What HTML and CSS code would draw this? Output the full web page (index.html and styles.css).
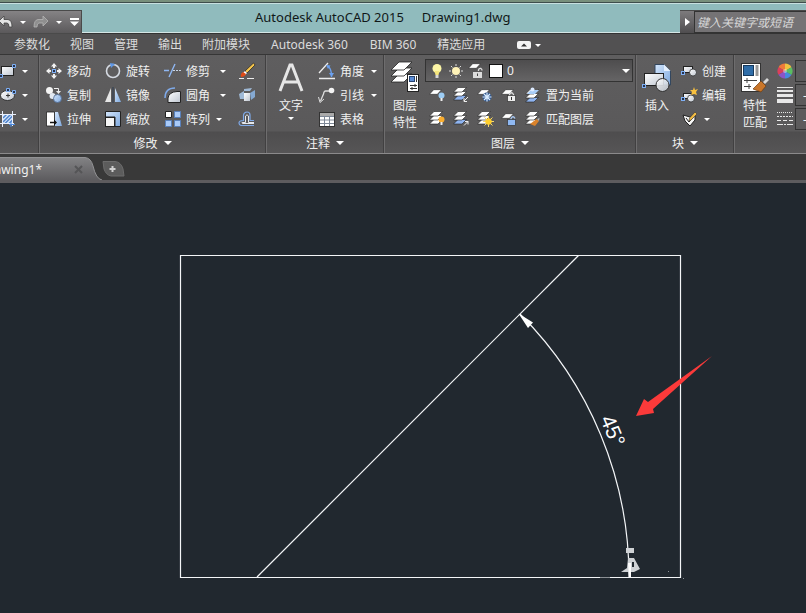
FILE: index.html
```html
<!DOCTYPE html>
<html lang="zh-CN">
<head>
    <meta charset="UTF-8">
    <meta name="viewport" content="width=device-width, initial-scale=1.0">
    <title>Autodesk AutoCAD 2015 - Drawing1.dwg</title>
    <link rel="stylesheet" href="styles.css">
</head>
<body>
    <!-- shared shapes -->
    <svg class="defs" width="0" height="0" aria-hidden="true">
        <defs>
            <linearGradient id="blue" x1="0" y1="0" x2="1" y2="1">
                <stop offset="0" stop-color="#d3e5fb"/>
                <stop offset="1" stop-color="#7fa9de"/>
            </linearGradient>
            <linearGradient id="white" x1="0" y1="0" x2="1" y2="1">
                <stop offset="0" stop-color="#ffffff"/>
                <stop offset="1" stop-color="#bfc6d0"/>
            </linearGradient>
            <linearGradient id="tabfill" x1="0" y1="0" x2="0" y2="1">
                <stop offset="0" stop-color="#828284"/>
                <stop offset="1" stop-color="#5d5c5f"/>
            </linearGradient>
            <symbol id="sheet" viewBox="0 0 14 6">
                <path d="M5 .5H13.500L9 5.500H.5Z" fill="#fff" stroke="#222" stroke-width=".6"/>
            </symbol>
            <symbol id="stack" viewBox="0 0 14 14">
                <path d="M5 8.500H13.500L9 13H.5Z" fill="#fff" stroke="#222" stroke-width=".6"/>
                <path d="M5 4.500H13.500L9 9H.5Z" fill="#fff" stroke="#222" stroke-width=".6"/>
                <path d="M5 .5H13.500L9 5H.5Z" fill="#fff" stroke="#222" stroke-width=".6"/>
            </symbol>
            <symbol id="stackblue" viewBox="0 0 14 14">
                <path d="M5 8.500H13.500L9 13H.5Z" fill="#8fb4f0" stroke="#222" stroke-width=".6"/>
                <path d="M5 4.500H13.500L9 9H.5Z" fill="#fff" stroke="#222" stroke-width=".6"/>
                <path d="M5 .5H13.500L9 5H.5Z" fill="#fff" stroke="#222" stroke-width=".6"/>
            </symbol>
        </defs>
    </svg>

    <header class="titlebar">
        <div class="quick">
            <button class="undo" aria-label="放弃"><svg width="13" height="14" viewBox="0 0 13 14"><path d="M-1 6L4 1V4.500H8Q12 5 12 12H9Q9 8 7 8H4V11Z" fill="#e4e4e4" stroke="#444" stroke-width=".8"/></svg></button>
            <button aria-label="放弃列表"><i class="caret"></i></button>
            <button class="redo" aria-label="重做"><svg width="16" height="14" viewBox="0 0 16 14"><path d="M15 6L10 1V4.500H5Q1 5 1 12H4Q4 8 6 8H10V11Z" fill="#8f8f8f" stroke="#b5b5b5" stroke-width=".8"/></svg></button>
            <button aria-label="重做列表"><i class="caret"></i></button>
            <button class="more" aria-label="自定义"><svg width="9" height="8" viewBox="0 0 9 8"><path d="M0 0H9V2H0ZM0 3.500H9L4.500 8Z" fill="#fff"/></svg></button>
        </div>
        <h1><span>Autodesk AutoCAD 2015</span><span>Drawing1.dwg</span></h1>
        <form class="search">
            <button type="button" aria-label="展开"><svg width="5" height="8" viewBox="0 0 5 8"><path d="M0 0L5 4L0 8Z" fill="#fff"/></svg></button>
            <input type="text" aria-label="搜索" placeholder="键入关键字或短语">
        </form>
    </header>

    <nav class="menu">
        <a href="#">参数化</a>
        <a href="#">视图</a>
        <a href="#">管理</a>
        <a href="#">输出</a>
        <a href="#">附加模块</a>
        <a class="latin" href="#">Autodesk 360</a>
        <a class="latin" href="#">BIM 360</a>
        <a href="#">精选应用</a>
        <button class="fold" aria-label="最小化功能区"><svg width="14" height="8" viewBox="0 0 14 8"><rect width="14" height="8" rx="2" fill="#f4f4f4"/><path d="M4 5.500L7 2.500L10 5.500Z" fill="#333"/></svg><i class="caret"></i></button>
    </nav>

    <main class="ribbon">
        <section class="panel draw">
            <div class="body">
                <div class="tools">
                    <button aria-label="矩形"><svg width="17" height="18" viewBox="0 0 17 18"><rect x="1.500" y="4.500" width="12" height="9" fill="url(#white)" stroke="#222"/><path d="M12.500 2.500h3v3h-3zM-.5 12.500h3v3h-3z" fill="#27334c" stroke="#7fb0f5"/></svg></button>
                    <button aria-label="矩形列表"><i class="caret"></i></button>
                    <button aria-label="椭圆"><svg width="17" height="18" viewBox="0 0 17 18"><ellipse cx="7.500" cy="9.500" rx="7" ry="5" fill="url(#white)" stroke="#333"/><path d="M6 9.500h4M8 7.500v4" stroke="#333"/><path d="M6.500 2.500h3v3h-3zM12.500 4.500h3v3h-3z" fill="#27334c" stroke="#7fb0f5"/></svg></button>
                    <button aria-label="椭圆列表"><i class="caret"></i></button>
                    <button aria-label="图案填充"><svg width="17" height="18" viewBox="0 0 17 18"><rect x="2.500" y="4.500" width="10" height="9" fill="#dbe9fb"/><path d="M3 8l3.500-3.500M3 12l7.500-7.500M5 13.500l7.500-7.500M9 13.500l3.500-3.500" stroke="#4d82cc" stroke-width="1.500"/><path d="M0 4.500H16M0 13.500H14M2.500 1V17M12.500 1V16" stroke="#e8eefa"/><path d="M11 12v5M9 14.500h6" stroke="#4d8be0"/></svg></button>
                    <button aria-label="图案填充列表"><i class="caret"></i></button>
                </div>
            </div>
            <div class="caption"></div>
        </section>

        <section class="panel modify">
            <div class="body">
                <div class="tools">
                    <button><svg width="18" height="18" viewBox="0 0 18 18"><path d="M9 1L12 4.500H10V6H8V4.500H6ZM9 17L6 13.500H8V12H10V13.500H12ZM1 9L4.500 6V8H6V10H4.500V12ZM17 9L13.500 12V10H12V8H13.500V6Z" fill="#f2f2f2"/><rect x="7.500" y="7.500" width="3" height="3" fill="#27334c" stroke="#7fb0f5"/></svg>移动</button>
                    <button><svg width="18" height="18" viewBox="0 0 18 18"><circle cx="9" cy="9" r="6.500" fill="none" stroke="#d5dae2" stroke-width="1.600"/><path d="M6 1L11 2L7 6Z" fill="#5d97e8"/></svg>旋转</button>
                    <button><svg width="18" height="18" viewBox="0 0 18 18"><path d="M0 8.500H5M5 15L11 2" stroke="#8fb7f2" stroke-width="1.400"/><path d="M9 8.500h2M12 8.500h2M15 8.500h2" stroke="#c9d5e6"/></svg>修剪</button>
                    <button aria-label="修剪列表"><i class="caret"></i></button>
                    <button aria-label="删除"><svg width="18" height="18" viewBox="0 0 18 18"><path d="M15.500 1L17 3L9 11L7 9Z" fill="#f6c54c" stroke="#222" stroke-width=".7"/><path d="M7 9L9 11L7 13L5 11Z" fill="#fff"/><path d="M5 10L8 12Q7 15 3 15Q2 12 5 10Z" fill="#df4b18"/><path d="M1 16.500H6M9 16.500H16" stroke="#eee"/></svg></button>

                    <button><svg width="18" height="18" viewBox="0 0 18 18"><circle cx="4.500" cy="4.500" r="3.500" fill="#f4f4f4"/><circle cx="7.500" cy="10" r="3" fill="#e2e8f0"/><circle cx="12.500" cy="12.500" r="4" fill="url(#blue)" stroke="#4c6890" stroke-width=".8"/><path d="M9 2.500h4.500v3" fill="none" stroke="#eee"/><path d="M11 5h5L13.500 8Z" fill="#eee"/></svg>复制</button>
                    <button><svg width="18" height="18" viewBox="0 0 18 18"><path d="M7 2V16H1Z" fill="#e6e6e6"/><path d="M11 2V16H17Z" fill="url(#blue)"/><path d="M9 1V17" stroke="#2f3c50"/></svg>镜像</button>
                    <button><svg width="18" height="18" viewBox="0 0 18 18"><path d="M4 16.500V12Q5 6 13 5.500H16.500V16.500Z" fill="url(#white)" stroke="#222"/><path d="M1 12Q1 2 11 2" fill="none" stroke="#7ea9e8" stroke-width="1.500"/></svg>圆角</button>
                    <button aria-label="圆角列表"><i class="caret"></i></button>
                    <button aria-label="分解"><svg width="18" height="18" viewBox="0 0 18 18"><path d="M1 8L6 5V13L2 13ZM6 3L14 2L12 5L6 5Z" fill="#9fb9d6"/><path d="M6 7H12V15H6Z" fill="url(#white)"/><path d="M12 7L17 4V11L13 14Z" fill="#85a9d2"/></svg></button>

                    <button><svg width="18" height="18" viewBox="0 0 18 18"><path d="M10 2H13L17 16H10Z" fill="url(#blue)"/><path d="M1.500 2H9.500V16H1.500Z" fill="#fff" stroke="#222" stroke-width=".8"/><path d="M5 12.500H11" stroke="#111" stroke-width="1.500"/><path d="M9 9.500L12 12.500L9 15.500Z" fill="#111"/></svg>拉伸</button>
                    <button><svg width="18" height="18" viewBox="0 0 18 18"><path d="M1.500 1.500H16.500V16.500H11V7H1.500Z" fill="url(#blue)" stroke="#222"/><rect x="1.500" y="7.500" width="9" height="9" fill="#f5f5f5" stroke="#222"/></svg>缩放</button>
                    <button><svg width="18" height="18" viewBox="0 0 18 18"><path d="M1.500 1.500h6v6h-6z" fill="#fff" stroke="#222"/><path d="M10.500 1.500h6v6h-6zM1.500 10.500h6v6h-6zM10.500 10.500h6v6h-6z" fill="#a9caf8" stroke="#5981bb"/></svg>阵列</button>
                    <button class="near" aria-label="阵列列表"><i class="caret"></i></button>
                    <button aria-label="偏移"><svg width="18" height="18" viewBox="0 0 18 18"><path d="M16 15.500H3Q1 15 1 13Q1 10.500 5.500 10.500V5Q6 2 9 2Q12 2 12 5V10.500H16" fill="none" stroke="#7ea9e8" stroke-width="1.200"/><path d="M16 13.500H4.500Q3 12.500 5 12.500H7.500V6Q9 3.500 10.500 6V12.500H16" fill="none" stroke="#e4e7ec"/></svg></button>
                </div>
            </div>
            <button class="caption">修改<i class="caret big"></i></button>
        </section>

        <section class="panel annotate">
            <div class="body">
                <button class="large"><svg width="30" height="36" viewBox="0 0 30 36"><path d="M4 32L14 6H16L26 32M8 23H22" fill="none" stroke="#e6e6e6" stroke-width="3"/></svg><span>文字</span><i class="caret"></i></button>
                <div class="tools">
                    <button><svg width="18" height="18" viewBox="0 0 18 18"><path d="M1 16.500H17M1 11L10 1" stroke="#eee" stroke-width="1.300"/><path d="M10 4Q14 8 13.500 15" fill="none" stroke="#6ba0ee" stroke-width="1.400"/><path d="M8 3L12.500 3.500L10 7ZM11 11H16L13.500 15Z" fill="#6ba0ee"/></svg>角度</button>
                    <button aria-label="角度列表"><i class="caret"></i></button>
                    <button><svg width="18" height="18" viewBox="0 0 18 18"><circle cx="13.500" cy="4.500" r="2.800" fill="#f4f4f4"/><path d="M11 5H7.500Q6 5 5.500 8L2.500 15" fill="none" stroke="#ddd" stroke-width="1.300"/><path d="M.5 11L2 16.500L6 13" fill="none" stroke="#ddd"/></svg>引线</button>
                    <button aria-label="引线列表"><i class="caret"></i></button>
                    <button><svg width="18" height="18" viewBox="0 0 18 18"><rect x="1.500" y="2.500" width="15" height="14" fill="#fff" stroke="#333"/><path d="M2 3H16V6H2Z" fill="#aaa"/><path d="M2 6.500H16M2 10H16M2 13.500H16M6.500 6V16M11.500 6V16" stroke="#7e8896"/></svg>表格</button>
                </div>
            </div>
            <button class="caption">注释<i class="caret big"></i></button>
        </section>

        <section class="panel layers">
            <div class="body">
                <button class="large"><svg width="30" height="36" viewBox="0 0 30 36"><path d="M9 15H22L14 23H1Z" fill="#fff" stroke="#222" stroke-width=".8"/><path d="M9 9H22L14 17H1Z" fill="#fff" stroke="#222" stroke-width=".8"/><path d="M9 3H22L14 11H1Z" fill="#fff" stroke="#222" stroke-width=".8"/><rect x="17.500" y="15.500" width="11" height="17" fill="#fff" stroke="#222"/><rect x="19.500" y="17.500" width="5" height="5" fill="#5c8dd6" stroke="#27436f"/><path d="M26.500 17V23M20 26.500H27M20 29.500H27M25 25V28M22 28V31" stroke="#333"/></svg><span>图层</span><span>特性</span></button>
                <div class="side">
                    <div class="current">
                        <svg width="14" height="18" viewBox="0 0 14 18"><circle cx="7" cy="6.500" r="4.500" fill="#fdf6a6"/><path d="M4.500 9H9.500L8.500 13H5.500Z" fill="#f4e57c"/><path d="M5.500 13H8.500V16H5.500Z" fill="#d8d8d8"/></svg>
                        <svg width="18" height="18" viewBox="0 0 18 18"><path d="M9 2V4M9 14V16M2 9H4M14 9H16M4 4L5.500 5.500M12.500 12.500L14 14M14 4L12.500 5.500M5.500 12.500L4 14" stroke="#ddd"/><circle cx="9" cy="9" r="4" fill="#fff3b8"/></svg>
                        <svg width="18" height="18" viewBox="0 0 18 18"><use href="#sheet" x="0" y="1" width="13" height="6"/><path d="M10.500 9V8Q11 6 13 6.500Q14 7 14 8.500" fill="none" stroke="#ddd" stroke-width="1.300"/><rect x="5" y="10" width="9" height="6" fill="#ddd"/><path d="M9.500 11.500V14" stroke="#444"/></svg>
                        <span class="swatch"></span>
                        <select aria-label="图层"><option>0</option></select>
                        <i class="caret big"></i>
                    </div>
                    <div class="tools">
                        <button aria-label="关闭图层"><svg width="18" height="18" viewBox="0 0 18 18"><use href="#sheet" x="0" y="3" width="13" height="6"/><circle cx="12.500" cy="9.500" r="3" fill="#9cccf4"/><path d="M12.500 12V15" stroke="#eee" stroke-width="2"/></svg></button>
                        <button aria-label="隔离图层"><svg width="18" height="18" viewBox="0 0 18 18"><use href="#stackblue" x="0" y="1" width="14" height="14"/><path d="M15 11L11 15M11 12V15.500H14" fill="none" stroke="#eee"/></svg></button>
                        <button aria-label="冻结图层"><svg width="18" height="18" viewBox="0 0 18 18"><use href="#sheet" x="0" y="3" width="13" height="6"/><circle cx="10" cy="11" r="4.500" fill="#35598d"/><path d="M10 6.500V15.500M5.500 11H14.500M7 8L13 14M13 8L7 14" stroke="#d9ecff" stroke-width="1.200"/></svg></button>
                        <button aria-label="锁定图层"><svg width="18" height="18" viewBox="0 0 18 18"><use href="#sheet" x="0" y="3" width="13" height="6"/><path d="M8.500 10V8.500Q10.500 5 12.500 8.500V10" fill="none" stroke="#ddd" stroke-width="1.300"/><rect x="6.500" y="9.500" width="8" height="6" fill="#eee" stroke="#333" stroke-width=".7"/><path d="M10.500 11V14" stroke="#333"/></svg></button>
                        <button class="wide"><svg width="18" height="18" viewBox="0 0 18 18"><use href="#stackblue" x="0" y="3" width="14" height="14"/><path d="M6 4H14L10 8H2Z" fill="#a7ccf8"/><circle cx="7.500" cy="3.500" r="2" fill="#dceaff"/></svg>置为当前</button>

                        <button aria-label="打开所有图层"><svg width="18" height="18" viewBox="0 0 18 18"><use href="#stack" x="0" y="1" width="14" height="14"/><circle cx="12.500" cy="9.500" r="3" fill="#f9ad2f"/><path d="M12.500 12V15" stroke="#eee" stroke-width="2"/></svg></button>
                        <button aria-label="取消隔离"><svg width="18" height="18" viewBox="0 0 18 18"><use href="#stackblue" x="0" y="1" width="14" height="14"/><path d="M11 15.500L15 11.500M12 11.500H15V14.500" fill="none" stroke="#eee"/></svg></button>
                        <button aria-label="解冻所有图层"><svg width="18" height="18" viewBox="0 0 18 18"><use href="#stack" x="0" y="1" width="14" height="14"/><path d="M11.500 6V17M6 11.500H17M7.500 7.500L15.500 15.500M15.500 7.500L7.500 15.500" stroke="#f8d96b"/><circle cx="11.500" cy="11.500" r="3.200" fill="#ffcf2d"/></svg></button>
                        <button aria-label="解锁图层"><svg width="18" height="18" viewBox="0 0 18 18"><use href="#sheet" x="0" y="3" width="13" height="6"/><path d="M10 10V8.500Q12 5 14 8.500" fill="none" stroke="#a9c9f5" stroke-width="1.300"/><rect x="6.500" y="9.500" width="8" height="6" fill="#8fb8f2" stroke="#333" stroke-width=".7"/></svg></button>
                        <button class="wide"><svg width="18" height="18" viewBox="0 0 18 18"><use href="#stack" x="0" y="1" width="14" height="14"/><path d="M11.500 9L14 11L10 16L5 14Z" fill="#d9822b"/><path d="M12 9L14.500 8L14 11Z" fill="#b8b8b8"/></svg>匹配图层</button>
                    </div>
                </div>
            </div>
            <button class="caption">图层<i class="caret big"></i></button>
        </section>

        <section class="panel block">
            <div class="body">
                <button class="large"><svg width="30" height="36" viewBox="0 0 30 36"><path d="M13 5.500H22L28.500 12V26H13Z" fill="url(#blue)" stroke="#33475f"/><path d="M22 5.500V12H28.500Z" fill="#e4effd"/><rect x="2.500" y="14.500" width="19" height="12" fill="url(#white)" stroke="#222"/><circle cx="20.500" cy="26" r="6.500" fill="url(#white)" fill-opacity=".9" stroke="#333"/><rect x=".5" y="25.500" width="3" height="3" fill="#27334c" stroke="#7fb0f5"/></svg><span>插入</span></button>
                <div class="tools">
                    <button><svg width="18" height="18" viewBox="0 0 18 18"><rect x="2.500" y="4.500" width="9" height="6" fill="url(#white)" stroke="#222"/><circle cx="12" cy="10.500" r="3.500" fill="url(#white)" stroke="#222" stroke-width=".7"/><rect x=".5" y="9.500" width="3" height="3" fill="#27334c" stroke="#7fb0f5"/></svg>创建</button>
                    <button><svg width="18" height="18" viewBox="0 0 18 18"><rect x="2.500" y="7.500" width="8" height="5" fill="url(#white)" stroke="#222"/><circle cx="10" cy="12.500" r="3.500" fill="url(#white)" stroke="#222" stroke-width=".7"/><path d="M13 1L14 4L17 3L15 6L16 9L13 8L10 9L11 6L9 4H12Z" fill="#f9c13f"/><rect x=".5" y="11.500" width="3" height="3" fill="#27334c" stroke="#7fb0f5"/></svg>编辑</button>
                    <button class="attr" aria-label="编辑属性"><svg width="18" height="18" viewBox="0 0 18 18"><path d="M2 5L9 7L14 5V10L9 16L4 11Z" fill="#f5f5f5" stroke="#222"/><path d="M5 8L8 12L13 6" fill="none" stroke="#222"/><path d="M14 2L16 4L10 10L8 11L8.500 8Z" fill="#f2bc45" stroke="#333" stroke-width=".6"/></svg><i class="caret"></i></button>
                </div>
            </div>
            <button class="caption">块<i class="caret big"></i></button>
        </section>

        <section class="panel props">
            <div class="body">
                <button class="large"><svg width="30" height="36" viewBox="0 0 30 36"><rect x="1.500" y="4.500" width="19" height="28" fill="#fff" stroke="#333"/><rect x="3.500" y="6.500" width="10" height="10" fill="#2f6da8" stroke="#17395c"/><path d="M17 6V17" stroke="#999" stroke-width="3"/><path d="M4 21.500H17M7 19V24M4 27.500H11M9 25V30" stroke="#444"/><path d="M27 19L29 21L25 25L23 23Z" fill="#d9d9d9"/><path d="M21 22L26 27L21 33L13 30Z" fill="#c9762a" stroke="#6e3c10" stroke-width=".7"/></svg><span>特性</span><span>匹配</span></button>
                <div class="tools">
                    <svg width="18" height="18" viewBox="0 0 18 18"><path d="M8 9L8 1.500A7.500 7.500 0 0 1 14.500 5.200Z" fill="#f0c33f"/><path d="M8 9L8 1.500A7.500 7.500 0 0 0 1.500 5.200Z" fill="#ef7a3a"/><path d="M8 9L1.500 5.200A7.500 7.500 0 0 0 1.500 12.800Z" fill="#dc3f5a"/><path d="M8 9L1.500 12.800A7.500 7.500 0 0 0 8 16.500Z" fill="#8b54c8"/><path d="M8 9L8 16.500A7.500 7.500 0 0 0 14.500 12.800Z" fill="#4789df"/><path d="M8 9L14.500 12.800A7.500 7.500 0 0 0 14.500 5.200Z" fill="#59bd62"/><circle cx="8" cy="9" r="2" fill="#fff" fill-opacity=".4"/></svg>
                    <select aria-label="颜色"><option>ByLayer</option></select>
                    <svg width="18" height="18" viewBox="0 0 18 18"><path d="M0 1.500H16" stroke="#e8e8e8"/><path d="M0 5H16" stroke="#e8e8e8" stroke-width="2"/><path d="M0 9.500H16" stroke="#e8e8e8" stroke-width="3"/><path d="M0 15H16" stroke="#e8e8e8" stroke-width="4"/></svg>
                    <select class="line" aria-label="线宽"><option>———— ByLayer</option></select>
                    <svg width="18" height="18" viewBox="0 0 18 18"><path d="M0 2.500H16" stroke="#e8e8e8" stroke-dasharray="1 1"/><path d="M0 6.500H16" stroke="#e8e8e8" stroke-dasharray="2 1"/><path d="M0 10.500H16" stroke="#e8e8e8" stroke-dasharray="4 2"/><path d="M0 14.500H16" stroke="#e8e8e8" stroke-dasharray="6 1 2 1"/></svg>
                    <select class="line" aria-label="线型"><option>———— ByLayer</option></select>
                </div>
            </div>
            <div class="caption"></div>
        </section>
    </main>

    <div class="files">
        <div class="file">
            <a href="#">Drawing1*</a>
            <button aria-label="关闭"><svg width="9" height="9" viewBox="0 0 9 9"><path d="M1 1L8 8M8 1L1 8" stroke="#555557" stroke-width="2"/></svg></button>
        </div>
        <svg class="tabend" width="18" height="23" viewBox="0 0 18 23"><path d="M0 .5H1Q7 1 9 9Q12 22 18 23H0Z" fill="url(#tabfill)"/><path d="M0 .5H1Q7 1 9 9Q12 22 18 23" fill="none" stroke="#929294"/></svg>
        <button class="new" aria-label="新图形"><svg width="24" height="18" viewBox="0 0 24 18"><path d="M1 1.500H13Q19 2 21 9L22 16H9Q4 15 2 9Z" fill="#5c5c5c" stroke="#6c6c6c"/><path d="M10.500 6V12M7.500 9H13.500" stroke="#d0d0d0" stroke-width="2"/></svg></button>
    </div>

    <div class="canvas">
        <svg viewBox="0 0 806 430">
            <g fill="none" stroke="#f4f6f8" stroke-width="1.200">
                <path d="M180.500 72.500H680.500V394.500H180.500Z"/>
                <path d="M578.500 72.500L257 394"/>
                <path d="M629 394A372 372 0 0 0 520 131"/>
            </g>
            <path d="M518.500 130.500L533 139.500L528 145Z" fill="#fff"/>
            <text class="angle" transform="translate(600 236) rotate(67)">45°</text>
            <path d="M636 233L644 216L648 219L712 173L653 226L654 230Z" fill="#fb3a3a"/>
            <!-- lower dimension arrowhead -->
            <path d="M626 365H634V370H626ZM628 375H634L640 386L634 389L621 389L627 385Z" fill="#cfd2d5"/>
            <path d="M632 379H634V384H632Z" fill="#21282f"/>
            <path d="M628 380H631L631 394H629Z" fill="#fff"/>
            <path d="M600 394.500H610" stroke="#21282f" stroke-opacity=".5" stroke-width="1.500"/>
            <path d="M668 388h1v1h-1zM683 395h1v1h-1z" fill="#8d9399"/>
        </svg>
    </div>
</body>
</html>
```
FILE: styles.css
```css
*{
    padding: 0;
    margin: 0;
    box-sizing: border-box;
}
body{
    min-height: 100vh;
    display: flex;
    flex-direction: column;
    overflow: hidden;
    background-color: #21282f;
    color: #f0f0f0;
    font-family: "Noto Sans", "Noto Sans CJK SC", sans-serif;
    font-size: 12px;
}
button, input, select{
    font: inherit;
    color: inherit;
    background: none;
    border: none;
    border-radius: 0;
}
button{
    display: flex;
    align-items: center;
    white-space: nowrap;
}
svg{
    display: block;
    flex: none;
}
a{
    color: inherit;
    text-decoration: none;
}
.defs{
    position: absolute;
}
.caret{
    border: 3px solid transparent;
    border-top-color: #fff;
    border-bottom: none;
}
.caret.big{
    border-width: 4px;
    border-bottom: none;
}

/* title bar */
.titlebar{
    height: 34px;
    display: flex;
    align-items: flex-end;
    justify-content: space-between;
    background: linear-gradient(#788f7c 2px, #3f4d4c 2px, #3f4d4c 3px, #c8e0e0 3px, #c8e0e0 4px, #90bbbd 4px, #90bbbd 32px, #d5e6e6 32px, #d5e6e6 33px, #333 33px);
}
.quick{
    width: 82px;
    height: 24px;
    display: flex;
    align-items: center;
    background: linear-gradient(#858385, #5b595b);
    border: 1px solid #4a4a4a;
    border-left: none;
}
.quick button{
    width: 20px;
    height: 22px;
    justify-content: center;
}
.quick .undo{
    width: 13px;
}
.quick .redo{
    width: 16px;
}
.quick .more{
    width: 11px;
}
h1{
    flex: 1;
    height: 34px;
    padding-left: 173px;
    display: flex;
    gap: 18px;
    line-height: 35px;
    font-size: 13px;
    font-weight: 400;
    color: #101818;
    white-space: nowrap;
}
.search{
    width: 126px;
    height: 24px;
    display: flex;
    border-top: 1px solid #4a4a4a;
    border-bottom: 1px solid #333;
    background-color: #757375;
}
.search button{
    width: 14px;
    justify-content: center;
    background: linear-gradient(#7d7b7d, #4f4d4f);
}
.search input{
    width: 112px;
    padding-left: 2px;
    border: 1px solid #333;
    border-right: none;
    font-style: italic;
}
.search input::placeholder{
    color: #d8d8d8;
}

/* ribbon tabs */
.menu{
    height: 21px;
    padding: 2px 0 0 14px;
    display: flex;
    align-items: center;
    gap: 20px;
    background-color: #525152;
    border-bottom: 1px solid #363636;
    color: #dcdcdc;
    line-height: 20px;
    white-space: nowrap;
}
.latin{
    padding: 0 1px;
}
.fold{
    gap: 4px;
    margin-left: 12px;
}

/* ribbon */
.ribbon{
    display: flex;
    background: linear-gradient(#5f5e5f, #5a595a 76px, #4e4d4e 77px, #565556);
    border-bottom: 1px solid #8b8a8b;
}
.panel{
    flex: none;
    padding-top: 4px;
    border-left: 1px solid #6e6d6e;
    border-right: 1px solid #414041;
}
.body{
    display: flex;
    height: 73px;
}
.tools{
    display: grid;
    grid-auto-rows: 24px;
    align-items: center;
    align-content: start;
}
.tools button{
    gap: 4px;
    height: 24px;
}
.caption{
    width: 100%;
    height: 21px;
    gap: 6px;
    justify-content: center;
}
.draw{
    border-left: none;
}
.draw .tools{
    grid-template-columns: 22px 16px;
}
.modify .body{
    padding: 0 7px 0 5px;
}
.modify .tools{
    grid-template-columns: 59px 60px 56px 18px 20px;
}
.modify .near{
    margin-left: -4px;
}
.annotate .body{
    gap: 9px;
    padding: 0 3px 0 6px;
}
.annotate .tools{
    grid-template-columns: 53px 9px;
}
.large{
    flex-direction: column;
    align-self: flex-start;
    width: 30px;
    line-height: 17px;
}
.large svg{
    margin-bottom: 2px;
}
.large .caret{
    margin-top: 3px;
}
.annotate .large{
    width: 36px;
}
.layers .body{
    gap: 5px;
    padding: 0 2px 0 5px;
}
.current{
    width: 208px;
    height: 23px;
    padding: 0 2px 0 4px;
    display: flex;
    align-items: center;
    gap: 3px;
    border: 1px solid #333;
    background: linear-gradient(#4e4d4e, #656465);
}
.swatch{
    width: 14px;
    height: 14px;
    background-color: #fff;
    border: 1px solid #111;
}
.current select{
    flex: 1;
    appearance: none;
    padding-left: 1px;
}
.layers .tools{
    grid-template-columns: repeat(4, 24px) 1fr;
    padding-top: 1px;
}
.layers .tools button{
    padding-left: 4px;
}
.layers .tools .wide{
    gap: 3px;
}
.block .body{
    gap: 9px;
    padding: 0 7px 0 5px;
}
.block .tools button{
    gap: 3px;
}
.block .tools .attr{
    gap: 5px;
}
.props{
    flex: 1;
    min-width: 0;
    overflow: hidden;
    border-right: none;
}
.props .body{
    gap: 7px;
    padding-left: 5px;
}
.props .tools{
    grid-template-columns: 18px 160px;
}
.props select{
    appearance: none;
    height: 22px;
    padding-left: 20px;
    border: 1px solid #333;
    background-color: #5c5b5c;
}
.props .line{
    padding-left: 7px;
}

/* drawing tabs */
.files{
    height: 29px;
    display: flex;
    align-items: flex-end;
    background-color: #393939;
    border-bottom: 3px solid #5d5c5f;
}
.file{
    width: 84px;
    height: 23px;
    display: flex;
    align-items: center;
    gap: 32px;
    background: linear-gradient(#828284, #5d5c5f);
    border-top: 1px solid #929294;
}
.file a{
    width: 42px;
    display: flex;
    justify-content: flex-end;
    overflow: hidden;
}
.new{
    align-self: center;
    margin-top: 3px;
}

/* drawing area */
.canvas{
    flex: 1;
}
.canvas svg{
    width: 100%;
}
.angle{
    font-family: "Liberation Sans", sans-serif;
    font-size: 21px;
    fill: #fff;
}
```
